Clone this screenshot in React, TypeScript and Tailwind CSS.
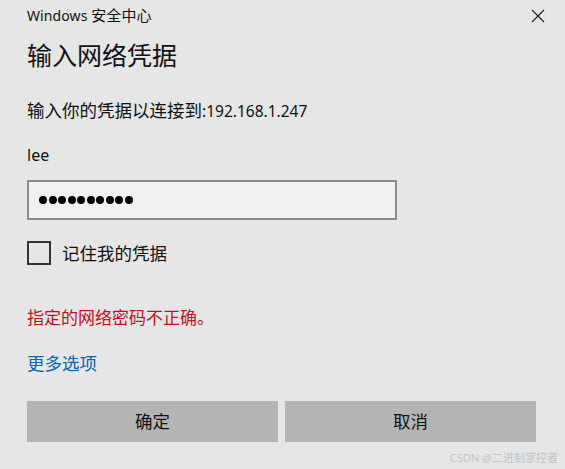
import React from "react";

const cjk = "font-['Noto_Sans','Noto_Sans_CJK_SC',sans-serif]";

export default function App() {
  return (
    <div className={`w-[565px] h-[469px] bg-[#e6e6e6] text-[#111] ${cjk} flex flex-col overflow-hidden`}>
      <div className="flex items-center justify-between pl-[27px] pr-[20px] h-[32px]">
        <div className="text-[14px] leading-none tracking-[0.1px] mt-[-2px]">
          <span className="text-[14px]">Windows</span> <span className="text-[15px]">安全中心</span>
        </div>
        <svg width="14" height="14" viewBox="0 0 14 14" className="mt-[-1px]">
          <path d="M1 1L13 13M13 1L1 13" stroke="#222" strokeWidth="1.2" />
        </svg>
      </div>
      <div className="pl-[27px] flex flex-col">
        <div className="text-[25px] leading-[30px] mt-[8px]">输入网络凭据</div>
        <div className="text-[17.5px] leading-[22px] mt-[29px]">
          输入你的凭据以连接到<span className="text-[15.5px]">:192.168.1.247</span>
        </div>
        <div className="text-[16px] leading-[22px] mt-[22px]">lee</div>
        <div className="mt-[14px] w-[370px] h-[40px] border-2 border-[#8a8a8a] bg-[#f0f0f0] flex items-center pl-[10px] gap-[1.5px]">
          {Array.from({ length: 10 }).map((_, i) => (
            <span key={i} className="w-[8px] h-[8px] rounded-full bg-black inline-block" />
          ))}
        </div>
        <div className="mt-[21px] flex items-center gap-[11px]">
          <div className="w-[24px] h-[24px] border-2 border-[#333]" />
          <span className="text-[17.5px] leading-[24px]">记住我的凭据</span>
        </div>
        <div className="mt-[41px] text-[17px] leading-[24px] text-[#c50f1f]">指定的网络密码不正确。</div>
        <div className="mt-[21px] text-[17.5px] leading-[24px] text-[#0067b8]">更多选项</div>
        <div className="mt-[26px] flex gap-[7px]">
          <div className="w-[251px] h-[41px] bg-[#b4b4b4] flex items-center justify-center text-[17.5px]">确定</div>
          <div className="w-[251px] h-[41px] bg-[#b4b4b4] flex items-center justify-center text-[17.5px]">取消</div>
        </div>
      </div>
      <div className="mt-[8px] pr-[7px] text-right text-[11px] leading-[16px] text-[#c4c4c4]">CSDN @二进制掌控者</div>
    </div>
  );
}
